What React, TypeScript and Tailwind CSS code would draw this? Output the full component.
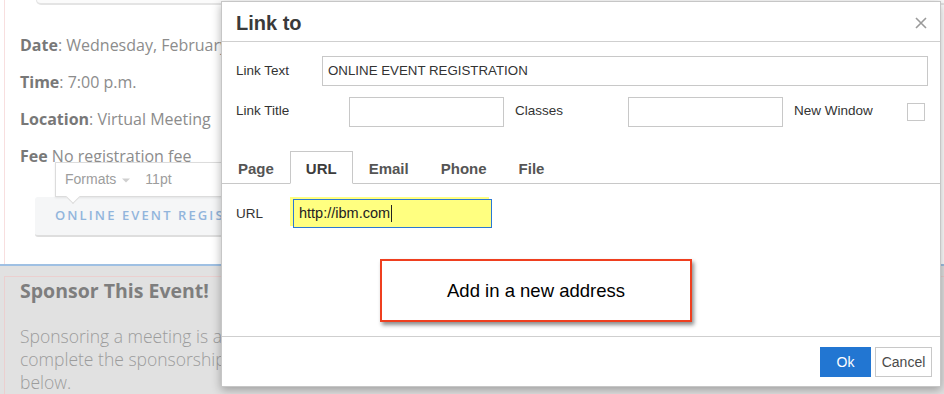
import React from "react";

const DETAILS = [
  { label: "Date", sep: ": ", value: "Wednesday, February 24, 2021" },
  { label: "Time", sep: ": ", value: "7:00 p.m." },
  { label: "Location", sep: ": ", value: "Virtual Meeting" },
  { label: "Fee", sep: " ", value: "No registration fee" },
];

const TABS = ["Page", "URL", "Email", "Phone", "File"];

function EventPage() {
  return (
    <div className="flex h-full flex-col font-['Open_Sans',sans-serif]">
      <div className="ml-[4px] flex-1 border-l border-[#f8dfdf]">
        {/* bottom edge of the card above */}
        <div className="ml-[31px] h-[5px] rounded-bl-[5px] border-b-2 border-l border-[#e4e4e4] bg-[#fbfbfb]" />

        <div className="pl-[15px] pt-[29px] text-[16px] leading-[22px] text-[#8c8c8c]">
          {DETAILS.map((d, i) => (
            <p key={d.label} className={i < DETAILS.length - 1 ? "mb-[15px] whitespace-nowrap" : "whitespace-nowrap"}>
              <span className="font-bold text-[#787878]">{d.label}</span>
              {d.sep}
              {d.value}
            </p>
          ))}
        </div>

        <button
          type="button"
          className="ml-[30px] mt-[30px] flex h-[40px] w-[300px] items-center rounded-[3px] border-b-2 border-[#dedede] bg-[#f5f6f7] pl-[20px] text-[13px] font-semibold tracking-[2.1px] text-[#92b5dc] whitespace-nowrap"
        >
          ONLINE EVENT REGISTRATION
        </button>
      </div>

      <div className="h-[2px] bg-[#9fc0e3]" />

      <div className="h-[128px] bg-[#e1e1e1] pl-[4px] pt-[10px]">
        <div className="h-full border-l border-t border-[#ebcfcf] pl-[15px]">
          <h2 className="text-[19.5px] font-bold leading-[28px] text-[#7e7e7e]">Sponsor This Event!</h2>
          <p className="mt-[20px] whitespace-nowrap text-[17.5px] font-light leading-[23px] text-[#9c9c9c]">
            Sponsoring a meeting is a great way to support our community. To sponsor,
            <br />
            complete the sponsorship form and submit it with the details requested
            <br />
            below.
          </p>
        </div>
      </div>
    </div>
  );
}

function FormatsBar() {
  return (
    <div className="absolute left-[55px] top-[162px] flex h-[35px] w-[175px] items-center border border-[#dcdcdc] bg-white pl-[9px] font-['Liberation_Sans',Arial,sans-serif] text-[14px] text-[#9d9d9d] shadow-[0_1px_2px_rgba(0,0,0,0.08)]">
      <span>Formats</span>
      <svg width="10" height="6" viewBox="0 0 10 6" className="ml-[5px]">
        <path d="M1 1.5h8L5 5.5z" fill="#cfcfcf" />
      </svg>
      <span className="ml-[14px]">11pt</span>
      <div className="absolute -bottom-[6px] left-[12px] h-[10px] w-[10px] rotate-45 border-b border-r border-[#dcdcdc] bg-white" />
    </div>
  );
}

function LinkDialog() {
  return (
    <div className="absolute left-[221px] top-[1px] flex h-[386px] w-[720px] flex-col border border-[#c6c6c6] bg-white font-['Liberation_Sans',Arial,sans-serif] text-[#333] shadow-[0_3px_9px_rgba(0,0,0,0.3)]">
      {/* header */}
      <div className="flex h-[40px] shrink-0 items-center justify-between border-b border-[#cfcfcf] pl-[14px] pr-[10px] pt-[2px]">
        <h1 className="text-[20px] font-bold text-[#3a3a3a]">Link to</h1>
        <svg width="14" height="14" viewBox="0 0 14 14" className="mr-[2px]">
          <path d="M2 2l10 10M12 2L2 12" stroke="#9a9a9a" strokeWidth="1.6" />
        </svg>
      </div>

      {/* body */}
      <div className="flex flex-1 flex-col pt-[14px] text-[13.5px]">
        <div className="flex h-[30px] items-center pl-[14px]">
          <span className="w-[86px] shrink-0">Link Text</span>
          <div className="flex h-[30px] w-[606px] items-center border border-[#c8c8c8] pl-[5px] text-[13.3px]">
            ONLINE EVENT REGISTRATION
          </div>
        </div>

        <div className="mt-[10px] flex h-[30px] items-center pl-[14px] pt-px">
          <span className="w-[113px] shrink-0">Link Title</span>
          <div className="h-[30px] w-[155px] border border-[#c8c8c8]" />
          <span className="ml-[11px] w-[113px] shrink-0">Classes</span>
          <div className="h-[30px] w-[155px] border border-[#c8c8c8]" />
          <span className="ml-[11px] w-[113px] shrink-0">New Window</span>
          <div className="h-[18px] w-[18px] border border-[#c8c8c8]" />
        </div>

        {/* tabs */}
        <div className="mt-[25px] flex h-[33px] border-b border-[#c8c8c8]">
          {TABS.map((t) => (
            <div
              key={t}
              className={
                t === "URL"
                  ? "-mb-px flex h-[33px] items-center border border-[#c8c8c8] border-b-white bg-white px-[15px] pt-[3px] text-[15px] font-bold text-[#3c3c3c]"
                  : "flex h-[33px] items-center px-[16px] pt-[4px] text-[15px] font-bold text-[#555]"
              }
            >
              {t}
            </div>
          ))}
        </div>

        <div className="mt-[15px] flex h-[29px] items-center pl-[14px]">
          <span className="w-[57px] shrink-0 pt-[2px]">URL</span>
          <div className="flex h-[29px] w-[199px] items-center border border-[#2a78d4] bg-[#ffff80] pl-[5px] text-[14.5px] text-[#222] shadow-[-3px_-2px_0_#ffff80]">
            <span className="border-r border-[#222] pr-px leading-[17px]">http://ibm.com</span>
          </div>
        </div>
      </div>

      {/* footer */}
      <div className="flex h-[50px] shrink-0 items-start justify-end gap-[4px] border-t border-[#cfcfcf] pr-[8px] pt-[10px] text-[14px]">
        <button type="button" className="h-[30px] w-[51px] bg-[#2276d2] text-white">
          Ok
        </button>
        <button type="button" className="h-[30px] w-[57px] border border-[#c8c8c8] bg-white text-[#4a4a4a]">
          Cancel
        </button>
      </div>
    </div>
  );
}

function Callout() {
  return (
    <div className="absolute left-[380px] top-[259px] flex h-[63px] w-[312px] items-center justify-center border-2 border-[#ef3f1f] bg-white font-['Liberation_Sans',Arial,sans-serif] text-[18.5px] text-black shadow-[2px_3px_4px_rgba(0,0,0,0.45)]">
      Add in a new address
    </div>
  );
}

export default function App() {
  return (
    <div className="relative h-[394px] w-[944px] overflow-hidden bg-white">
      <EventPage />
      <FormatsBar />
      <LinkDialog />
      <Callout />
    </div>
  );
}
